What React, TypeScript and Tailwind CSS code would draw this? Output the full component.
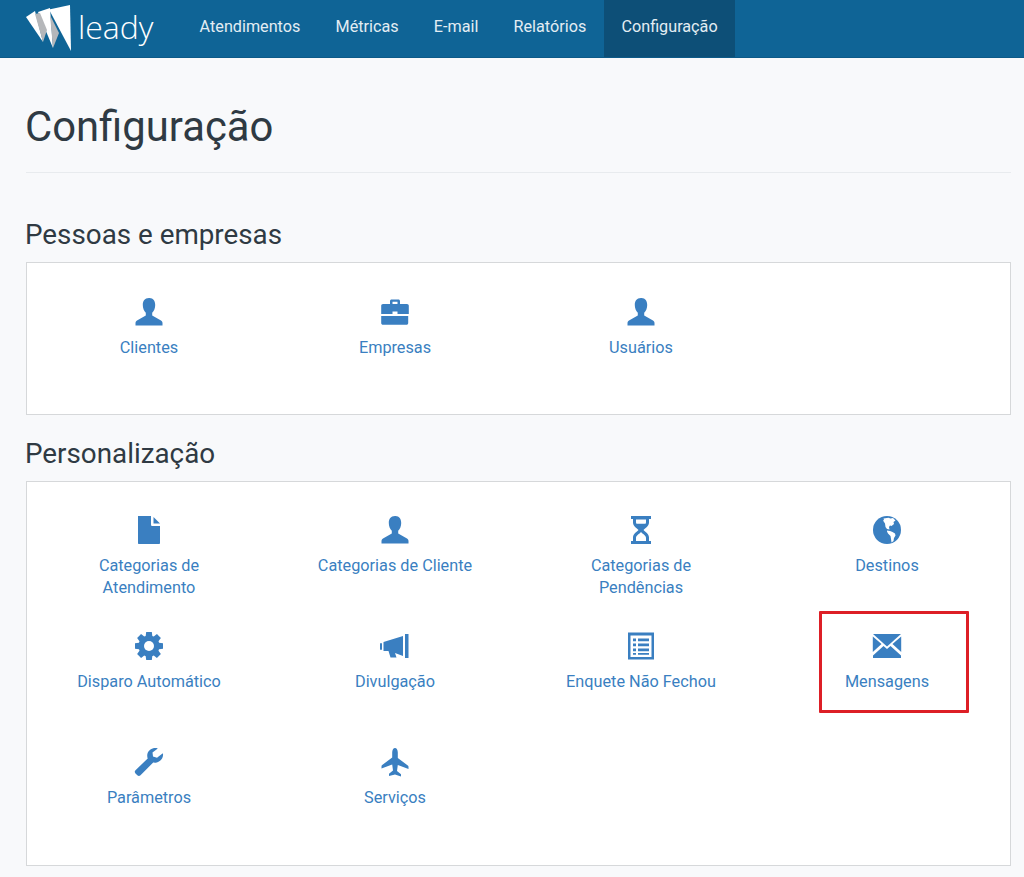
import React from "react";

const Icon = ({ children, w = 30 }: { children: React.ReactNode; w?: number }) => (
  <svg viewBox="0 0 30 30" width={w} height={w} fill="#3a7fc1" className="block">
    {children}
  </svg>
);

const User = () => (
  <Icon>
    <path d="M15 1c-4.300 0-6.200 3.200-6.200 7 0 3.200 1.200 6 3 7.800v2.700L3 23.500c-.8.500-1.500 1.300-1.500 2.500v2.500h27V26c0-1.200-.7-2-1.500-2.500l-8.800-5v-2.700c1.800-1.800 3-4.600 3-7.800 0-3.800-1.900-7-5.700-7z" />
  </Icon>
);
const Briefcase = () => (
  <Icon>
    <path fillRule="evenodd" d="M10 7V4c0-1 .7-1.600 1.600-1.600h6.800c.9 0 1.600.6 1.600 1.600v3h7c1 0 1.800.8 1.800 1.800V17H17.500v-2.500h-5V17H1.200V8.800C1.200 7.800 2 7 3 7h7zm2.500 0h5V4.700h-5V7z" />
    <path d="M1.200 19h27v7c0 1-.8 1.800-1.800 1.800H3c-1 0-1.800-.8-1.800-1.800v-7z" />
  </Icon>
);
const FileIcon = () => (
  <Icon>
    <path d="M4 1h13v8.500c0 1 .6 1.500 1.500 1.500H26v17c0 .6-.5 1-1 1H5c-.6 0-1-.4-1-1V1z" />
    <path d="M19.500 2l6.500 6.500h-6.500z" />
  </Icon>
);
const Hourglass = () => (
  <Icon>
    <path fillRule="evenodd" d="M5 1h20v3h-2v3.500c0 3.800-3.800 5.500-5.500 7.500 1.700 2 5.500 3.700 5.500 7.500V26h2v3H5v-3h2v-3.500c0-3.800 3.800-5.500 5.500-7.500C10.800 13 7 11.300 7 7.500V4H5V1zm5 3.500v2.800c0 .6.200 1 .5 1.500h9c.3-.5.500-.9.500-1.500V4.500H10zM15 17c-1.600 2-5 3.500-5 6v3h10v-3c0-2.500-3.400-4-5-6z" />
  </Icon>
);
const Globe = () => (
  <Icon>
    <circle cx="15" cy="15" r="14" />
    <path fill="#fff" d="M11.500 3.500l5-.8 2 .8 2.500-.5 2.500 2.500-2 1.500.5 2-2.500 2-1.500-.5-1 1.500.5 2.500-2.500-.5-1.500-2-.5-3.500-2-3 1-.5z" />
    <path fill="#fff" d="M15 15.500l3 .5 2.500 1 2.500 1.500.5 2-1.500 2.500-.5 3-2 1.500-.5-3.500-.5-3-2.500-2.500-1-2z" />
  </Icon>
);
const Cog = () => (
  <Icon>
    <circle cx="15" cy="15" r="10.500" />
    {[0, 45, 90, 135, 180, 225, 270, 315].map((a) => (
      <path key={a} d="M12.200 1h5.600l.8 6h-7.200z" transform={`rotate(${a} 15 15)`} />
    ))}
    <circle cx="15" cy="15" r="5" fill="#fff" />
  </Icon>
);
const Bullhorn = () => (
  <Icon>
    <path d="M3.500 11L23 5v20l-8-3 1.500 4.500h-6l-2-6.500h-5z" />
    <rect x="25" y="3" width="3.500" height="24" />
    <rect x="0" y="12" width="2" height="7" rx="1" />
  </Icon>
);
const ListAlt = () => (
  <Icon>
    <path fillRule="evenodd" d="M2 1.500h26v27H2v-27zM4.500 4.500v21.500h21V4.500h-21z" />
    <path d="M7 7.500h3v2.800H7zM12 7.500h11v2.800H12zM7 12.500h3v2.800H7zM12 12.500h11v2.800H12zM7 17.500h3v2.800H7zM12 17.500h11v2.800H12zM7 22h3v1.800H7zM12 22h11v1.800H12z" />
  </Icon>
);
const Envelope = () => (
  <Icon>
    <path d="M1 3h28L15 15.500z" />
    <path d="M.8 5.500v15.500l8.700-8zM29.200 5.500v15.500l-8.700-8z" />
    <path d="M11.500 15l3.500 3 3.500-3 10.500 9.500v2.500H1v-2.500z" />
  </Icon>
);
const Wrench = () => (
  <Icon>
    <path d="M28.500 6.500l-5.500 4.300-4-1.200-.5-4 5.300-4.200c-4.500-1.300-9.800 1.300-10.500 6.200-.2 1.400 0 2.700.4 3.900L1.500 23.200c-1 1-1 2.300 0 3.300l1.800 1.800c1 1 2.200 1 3.200 0l12.700-12.700c1.100.2 2.300.2 3.500-.1 4.200-1.100 6.800-4.800 6.300-9z" />
  </Icon>
);
const Plane = () => (
  <Icon>
    <path d="M15 1c1.600 0 2.800 2 2.800 4.500V11l10 7.500c.4.300.7.700.7 1.200v2.300l-10.700-4-.8 6 4 3.300v2.200L15 27.500l-6 1.500v-2.200l4-3.300-.8-6-10.700 4v-2.300c0-.5.300-.9.700-1.200l10-7.500V5.500C12.200 3 13.400 1 15 1z" />
  </Icon>
);

const Item = ({ icon, label, boxed }: { icon: React.ReactNode; label: React.ReactNode; boxed?: boolean }) => (
  <div className="relative flex flex-col items-center text-center">
    {icon}
    <a className="mt-[10px] block text-[16.250px] leading-[22px] text-[#3a7fc1]">{label}</a>
    {boxed && (
      <div className="absolute left-[55px] top-[-20px] h-[102px] w-[150px] rounded-[1px] border-[3px] border-[#dd1f26]" />
    )}
  </div>
);

const Logo = () => (
  <svg viewBox="0 0 46 47" width={46} height={47} className="block">
    <path d="M0 12L9 6l8 31z" fill="#fff" />
    <path d="M12 7l12-4 3 40z" fill="#fff" />
    <path d="M9 9l5-1 7 17-4 12z" fill="#b5b7ba" />
    <path d="M24 10l9 18-6 15z" fill="#b5b7ba" />
    <path d="M23 4.500L44 0l1 46z" fill="#fff" />
  </svg>
);

const navItems = ["Atendimentos", "Métricas", "E-mail", "Relatórios"];

export default function App() {
  return (
    <div className="min-h-[877px] bg-[#f8f9fb] font-['Roboto',sans-serif]">
      <nav className="flex h-[58px] items-stretch border-b border-[#0d5a88] bg-[#0f6496] pl-[26px]">
        <div className="flex w-[156px] items-center">
          <Logo />
          <span className="ml-[6px] mt-[-3px] font-['Open_Sans',sans-serif] text-[32px] font-light leading-none text-white">
            leady
          </span>
        </div>
        <div className="flex">
          {navItems.map((t) => (
            <a key={t} className="flex items-center px-[17.600px] pb-[2px] text-[16.200px] text-[#e3edf3]">
              {t}
            </a>
          ))}
          <a className="flex items-center bg-[#0d4f77] px-[17.600px] pb-[2px] text-[16.200px] text-[#e3edf3]">Configuração</a>
        </div>
      </nav>
      <main className="pl-[26px] pr-[13px]">
        <h1 className="ml-[-1px] mt-[40px] text-[41.800px] font-normal leading-[58px] text-[#2f3a43]">Configuração</h1>
        <hr className="mt-[16px] border-[#e8ebee]" />
        <h2 className="ml-[-1px] mt-[44px] text-[27.800px] leading-[36px] text-[#2f3a43]">Pessoas e empresas</h2>
        <section className="mt-[9px] h-[153px] border border-[#d6d8da] bg-white pt-[34px]">
          <div className="ml-[-1px] grid grid-cols-[repeat(4,246px)]">
            <Item icon={<User />} label="Clientes" />
            <Item icon={<Briefcase />} label="Empresas" />
            <Item icon={<User />} label="Usuários" />
          </div>
        </section>
        <h2 className="ml-[-1px] mt-[21px] text-[27.800px] leading-[36px] text-[#2f3a43]">Personalização</h2>
        <section className="mt-[9px] h-[385px] border border-[#d6d8da] bg-white pt-[33px]">
          <div className="ml-[-1px] grid grid-cols-[repeat(4,246px)] content-start [grid-auto-rows:116.200px]">
            <Item icon={<FileIcon />} label={<>Categorias de<br />Atendimento</>} />
            <Item icon={<User />} label="Categorias de Cliente" />
            <Item icon={<Hourglass />} label={<>Categorias de<br />Pendências</>} />
            <Item icon={<Globe />} label="Destinos" />
            <Item icon={<Cog />} label="Disparo Automático" />
            <Item icon={<Bullhorn />} label="Divulgação" />
            <Item icon={<ListAlt />} label="Enquete Não Fechou" />
            <Item icon={<Envelope />} label="Mensagens" boxed />
            <Item icon={<Wrench />} label="Parâmetros" />
            <Item icon={<Plane />} label="Serviços" />
          </div>
        </section>
      </main>
    </div>
  );
}
